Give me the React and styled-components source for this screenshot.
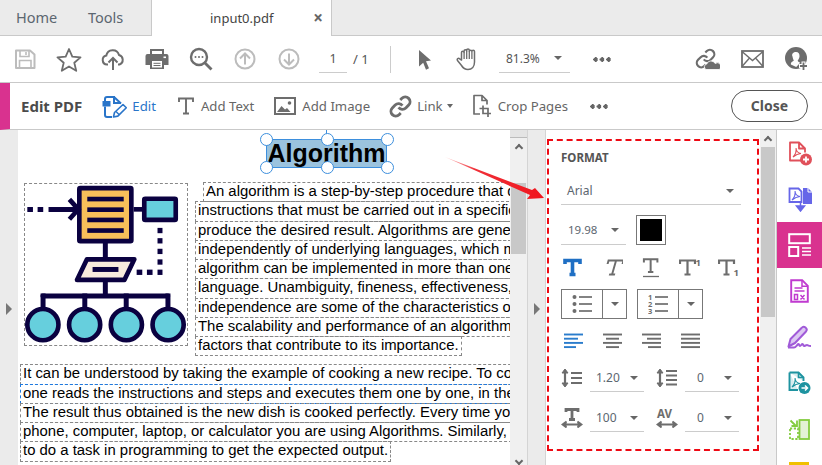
import styled, { createGlobalStyle } from "styled-components";

const Global = createGlobalStyle`
  html, body { margin: 0; padding: 0; background: #fff; }
  * { box-sizing: border-box; }
`;

const GREY = "#6d6d6d";
const UI = `"Noto Sans", "Open Sans", sans-serif`;

const Icon = ({ w = 24, h = 24, box, children, color = GREY }) => (
  <svg width={w} height={h} viewBox={box || `0 0 ${w} ${h}`} fill="none" stroke={color} style={{ display: "block", flex: "none" }}>
    {children}
  </svg>
);

/* top toolbar icons */
const SaveIcon = () => (
  <Icon w={22} h={22} color="#bcbcbc">
    <path d="M2 2.500h14l4.500 4v13.500h-18.500z" strokeWidth="2" strokeLinejoin="round" />
    <path d="M6 3v5.500h9v-5.500M12 4v3" strokeWidth="1.600" />
    <path d="M5.500 20v-7.500h11.500v7.500" strokeWidth="1.600" />
  </Icon>
);
const StarIcon = () => (
  <Icon w={26} h={25}>
    <path d="M13 2l3.300 7.700 8.200.7-6.200 5.400 1.900 8-7.200-4.300-7.200 4.300 1.900-8-6.200-5.400 8.200-.7z" strokeWidth="1.800" strokeLinejoin="round" />
  </Icon>
);
const CloudIcon = () => (
  <Icon w={24} h={24}>
    <path d="M7 17.500H6a4.500 4.500 0 0 1-.7-8.900 6.500 6.500 0 0 1 12.700-.6 5 5 0 0 1 .5 9.500H17" strokeWidth="2" />
    <path d="M12 23V11M7.500 15.500L12 11l4.500 4.500" strokeWidth="2" />
  </Icon>
);
const PrintIcon = () => (
  <Icon w={24} h={24}>
    <path d="M5 7V2h14v5h2.500A2 2 0 0 1 23.500 9v9h-4.500v4H5v-4H.5V9a2 2 0 0 1 2-2z" fill={GREY} stroke="none" />
    <path d="M7 4h10v3H7z" fill="#fff" stroke="none" />
    <path d="M7 14h10v6.500H7z" fill="#fff" stroke="none" />
    <path d="M8.500 16.300h7M8.500 18.500h7" strokeWidth="1" />
    <rect x="18.500" y="9.500" width="2.500" height="1.600" fill="#fff" stroke="none" />
  </Icon>
);
const SearchIcon = () => (
  <Icon w={24} h={24}>
    <circle cx="10" cy="10" r="8" strokeWidth="2.400" />
    <path d="M16 16l6.500 6.500" strokeWidth="2.800" />
    <circle cx="6.500" cy="10" r="1" fill={GREY} stroke="none" />
    <circle cx="10" cy="10" r="1" fill={GREY} stroke="none" />
    <circle cx="13.500" cy="10" r="1" fill={GREY} stroke="none" />
  </Icon>
);
const ArrowCircle = ({ down }) => (
  <Icon w={22} h={22} color="#bcbcbc">
    <circle cx="11" cy="11" r="9.500" strokeWidth="2" />
    <path d={down ? "M11 5.500v11M6 11.500l5 5 5-5" : "M11 16.500v-11M6 10.500l5-5 5 5"} strokeWidth="2" />
  </Icon>
);
const PointerIcon = () => (
  <Icon w={14} h={21}>
    <path d="M1 1l12 10.500-5 .8 3 7-3 1.400-2.800-7-4.200 3.800z" fill={GREY} stroke="none" />
  </Icon>
);
const HandIcon = () => (
  <Icon w={23} h={24}>
    <path d="M5.500 13V5.500a1.300 1.300 0 0 1 2.600 0V4a1.300 1.300 0 0 1 2.600 0v-.7a1.300 1.300 0 0 1 2.600 0V4.500a1.300 1.300 0 0 1 2.600 0 1.300 1.300 0 0 1 2.600 0V15c0 4.500-2.500 7.500-6.500 7.500-3.500 0-5-1.500-6.500-4L1.500 13.500c-.9-1.500.9-2.800 2.100-1.700z" strokeWidth="1.500" strokeLinejoin="round" />
    <path d="M8.100 5.500V12M10.700 4v8M13.300 4.500V12M15.900 5V12" strokeWidth="1.300" />
  </Icon>
);
const CHAIN_A = "M10 13a5 5 0 0 0 7.540.54l3-3a5 5 0 0 0-7.070-7.070l-1.720 1.710";
const CHAIN_B = "M14 11a5 5 0 0 0-7.540-.54l-3 3a5 5 0 0 0 7.070 7.070l1.710-1.710";
const LinkCloudIcon = () => (
  <Icon w={25} h={22}>
    <g transform="scale(.88)">
      <path d={CHAIN_A} strokeWidth="2.500" />
      <path d={CHAIN_B} strokeWidth="2.500" />
    </g>
    <path d="M11 21.500a3 3 0 0 1 .8-5.600 4.500 4.500 0 0 1 8.300-.4A3.200 3.200 0 0 1 24.500 21.500z" fill={GREY} stroke="#fff" strokeWidth=".8" />
  </Icon>
);
const MailIcon = () => (
  <Icon w={23} h={18}>
    <rect x="1" y="1" width="21" height="16" strokeWidth="1.800" />
    <path d="M1 1.500l10.500 9 10.500-9M1 16.500l7.500-8.500M22 16.500l-7.500-8.500" strokeWidth="1.400" />
  </Icon>
);
const UserIcon = () => (
  <Icon w={24} h={24}>
    <circle cx="11" cy="11" r="11" fill={GREY} stroke="none" />
    <path d="M11 5c2.500 0 3.800 2 3.500 4.500-.2 1.800-1 3.200-1.800 4 0 .8.500 1.200 1.500 1.700l1 .5-4 4.300-5.300-2.500c-.4-1.600 1-2.800 2.900-3.700 0-.6-1-2-1.300-4.300C6.200 7 8.500 5 11 5z" fill="#fff" stroke="none" />
    <path d="M18.500 14.500v9M14 19h9" stroke="#fff" strokeWidth="4" />
    <path d="M18.500 15.500v7.500M15 19h7" strokeWidth="1.800" />
  </Icon>
);

/* edit bar icons */
const EditIcon = () => (
  <Icon w={25} h={25} color="#2a75c9">
    <path d="M3 7V5a2 2 0 0 1 2-2H12v6h7" strokeWidth="2" />
    <path d="M0.500 7h8v5.500h-8z" fill="#2a75c9" stroke="none" />
    <path d="M12 3l7 6.500M3 12.500V21a2 2 0 0 0 2 2h5" strokeWidth="2" />
    <path d="M11.500 23l1-4.500 8.500-8 3.300 3.300-8.500 8.300z" strokeWidth="1.600" strokeLinejoin="round" />
    <path d="M14 17.500l3.500 3.500" strokeWidth="1.400" />
  </Icon>
);
const TextIcon = () => (
  <Icon w={16} h={18}>
    <path d="M1 5V1.500h14V5M8 1.500V16.500M5 16.500h6" strokeWidth="1.900" />
  </Icon>
);
const ImageIcon = () => (
  <Icon w={22} h={18}>
    <rect x="1" y="1" width="20" height="16" strokeWidth="2" />
    <path d="M3 15l4.500-6 3.500 3.500 2-1.500 3.500 4z" fill={GREY} stroke="none" />
    <circle cx="15.500" cy="6" r="1.800" fill={GREY} stroke="none" />
  </Icon>
);
const LinkIcon = () => (
  <Icon w={23} h={23} box="0 0 24 24">
    <path d={CHAIN_A} strokeWidth="3" />
    <path d={CHAIN_B} strokeWidth="3" />
  </Icon>
);
const CropIcon = () => (
  <Icon w={20} h={24}>
    <path d="M8 20H2V1.500h8l5 5v4M10 1.500v5h5" strokeWidth="1.700" strokeLinejoin="round" />
    <path d="M11 11.500v8h8M7.500 14.500h8.500v8.500" strokeWidth="1.700" />
  </Icon>
);

/* format panel icons */
const LetterT = ({ x = 0, y = 0, s = 1, w = 2, color = GREY, italic }) => (
  <path
    transform={`translate(${x} ${y}) scale(${s})${italic ? " skewX(-16) translate(5 0)" : ""}`}
    d="M1 5V1.500h15V5M8.500 1.500V15.500M5.500 15.500h6"
    stroke={color}
    strokeWidth={w}
    fill="none"
  />
);
const ListIcon = ({ numbered }) => (
  <Icon w={20} h={20}>
    {[3, 10, 17].map((y, i) => (
      <g key={y}>
        <path d={`M7 ${y}h13`} strokeWidth="1.700" />
        {numbered ? (
          <text x="0" y={y + 3} fontSize="7.500" fontFamily={UI} fontWeight="700" fill={GREY} stroke="none">{i + 1}</text>
        ) : (
          <circle cx="2.500" cy={y} r="2" fill={GREY} stroke="none" />
        )}
      </g>
    ))}
  </Icon>
);
const AlignIcon = ({ lines, color = GREY }) => (
  <Icon w={20} h={16} color={color}>
    {lines.map(([a, b], i) => (
      <path key={i} d={`M${a} ${1.500 + i * 4.200}H${b}`} strokeWidth="1.900" />
    ))}
  </Icon>
);
const SpacingArrows = () => (
  <>
    <path d="M4 2v16" strokeWidth="2.200" />
    <path d="M1 5l3-4 3 4zM1 15l3 4 3-4z" fill={GREY} stroke={GREY} strokeWidth="1" />
  </>
);
const LineSpaceIcon = () => (
  <Icon w={22} h={20}>
    <SpacingArrows />
    <path d="M10 5h11M10 10h11M10 15h11" strokeWidth="1.900" />
  </Icon>
);
const ParaSpaceIcon = () => (
  <Icon w={22} h={20}>
    <SpacingArrows />
    <path d="M10 3h11M10 7.500h11M10 12h11M10 16.500h11" strokeWidth="1.900" />
  </Icon>
);
const WidthArrow = () => (
  <path d="M2 16.500h18M5.500 13.500l-4 3 4 3M16.500 13.500l4 3-4 3" fill={GREY} stroke={GREY} strokeWidth="1.800" />
);
const ScaleIcon = () => (
  <Icon w={22} h={20}>
    <path d="M5 4V1.500h12V4M11 1.500v10M8 11.500h6" strokeWidth="2.800" />
    <WidthArrow />
  </Icon>
);
const KernIcon = () => (
  <Icon w={22} h={20}>
    <text x="1" y="10" fontSize="11.500" fontWeight="700" fontFamily={UI} fill={GREY} stroke="none">AV</text>
    <WidthArrow />
  </Icon>
);

/* right rail icons */
const RailDoc = ({ color, children }) => (
  <Icon w={24} h={25} color={color}>
    <path d="M14 19.500H2V1.500h9l6 6v4M11 1.500v6h6" strokeWidth="1.800" strokeLinejoin="round" />
    {children}
  </Icon>
);
const PdfGlyph = ({ color, x = 0, y = 0 }) => (
  <path transform={`translate(${x} ${y})`} d="M5 16c2-2 3.500-6 3-9 .2 3 2 5 5 5.500-2.500.2-5.500 1.500-8 3.500z" stroke={color} strokeWidth="1.100" />
);
const RailCreate = () => (
  <RailDoc color="#e0505a">
    <PdfGlyph color="#e0505a" />
    <circle cx="18" cy="18.500" r="6" fill="#e0505a" stroke="none" />
    <path d="M18 15.500v6M15 18.500h6" stroke="#fff" strokeWidth="1.800" />
  </RailDoc>
);
const RailCombine = () => (
  <Icon w={24} h={25} color="#6666e8">
    <path d="M1.500 1.500h9l3 3V15H1.500z" strokeWidth="1.800" />
    <PdfGlyph color="#6666e8" x="-1" y="-3" />
    <path d="M15 1h5l4 4v12H15z" fill="#6666e8" stroke="none" />
    <path d="M20 1v4h4" stroke="#fff" strokeWidth="1" />
    <path d="M12.500 15v5M8.500 19h8l-4 5z" fill="#6666e8" strokeWidth="1.500" />
  </Icon>
);
const RailLayout = () => (
  <Icon w={23} h={24} color="#fff">
    <rect x="1.200" y="1.200" width="20.600" height="9" strokeWidth="2" />
    <rect x="1.200" y="14" width="9" height="9" strokeWidth="2" />
    <path d="M14 15h9M14 18.500h9M14 22h9" strokeWidth="1.300" />
  </Icon>
);
const RailExport = () => (
  <Icon w={19} h={24} color="#c03ad0">
    <path d="M1.200 1.200h11l5.600 5.600v16H1.200z" strokeWidth="1.900" />
    <path d="M12 1.200v6h6" strokeWidth="1.500" />
    <path d="M4.500 9h8M4.500 12h10" strokeWidth="1.300" />
    <path d="M4.500 15.500h3v5h-3zM10.500 16l4 4.500M14.500 16l-4 4.500" strokeWidth="1.500" />
  </Icon>
);
const RailSign = () => (
  <Icon w={25} h={24} color="#a05ad8">
    <path d="M1.500 21.500l2-7.500L14.500 3a2.800 2.800 0 0 1 4.500 3.500L8 18z" fill="#dcc8f2" strokeWidth="2" strokeLinejoin="round" />
    <path d="M1 22.500h6c2 0 3-3 4.500-3.500 1 0 .5 2 1.500 2s1.500-2 2.500-2 .5 2 1.500 2 2-1 3-1 1 1 4 1" strokeWidth="2" />
  </Icon>
);
const RailSend = () => (
  <Icon w={23} h={24} color="#1e93a0">
    <path d="M1.500 1.500h9l5 5V10M1.500 1.500V19H10" strokeWidth="1.900" fill="#d8ecef" />
    <path d="M10.500 1.500v5h5" strokeWidth="1.600" />
    <PdfGlyph color="#1e93a0" x="-1" />
    <circle cx="16.500" cy="17" r="6" fill="#1e93a0" stroke="none" />
    <path d="M13.500 17h5.500M17 14.500l2.500 2.500-2.500 2.500" stroke="#fff" strokeWidth="1.500" />
  </Icon>
);
const RailOrganize = () => (
  <Icon w={21} h={21} color="#84cc40">
    <rect x="10.500" y="1" width="9.500" height="19" fill="#e4f2d6" strokeWidth="1.800" />
    <rect x="1" y="9.500" width="8" height="10.500" strokeWidth="1.800" strokeDasharray="2.200 1.600" />
    <path d="M8 1.500v5.500H2.500M6.500 6.500l-5-5" strokeWidth="1.800" />
  </Icon>
);

const Illustration = () => {
  const navy = "#0a0140";
  const cyan = "#66cfdd";
  return (
    <svg width="162" height="160" viewBox="75 163 489 482" fill={navy} stroke="none" style={{ display: "block" }}>
      <rect x="239" y="175" width="157" height="160" rx="3" fill="#f8bf5a" stroke={navy} strokeWidth="14" />
      {[201, 233, 264, 296].map((y) => <rect key={y} x="263" y={y} width="110" height="14" />)}
      <rect x="82" y="232" width="17" height="15" />
      <rect x="113" y="232" width="17" height="15" />
      <rect x="146" y="232" width="90" height="15" />
      <path d="M209 209l27 30-27 30" fill="none" stroke={navy} strokeWidth="14" />
      <rect x="403" y="232" width="28" height="14" />
      <rect x="435" y="207" width="95" height="64" rx="3" fill={cyan} stroke={navy} strokeWidth="14" />
      {[295, 326, 358, 390, 421].map((y) => <rect key={y} x="475" y={y} width="15" height="16" />)}
      <rect x="412" y="421" width="17" height="16" />
      <rect x="443" y="421" width="17" height="16" />
      <rect x="310" y="340" width="15" height="46" />
      <path d="M262 390h143l-30 62H232z" fill="#f8ebdd" stroke={navy} strokeWidth="14" strokeLinejoin="round" />
      <rect x="279" y="413" width="78" height="15" />
      <rect x="310" y="458" width="15" height="38" />
      <rect x="122" y="493" width="391" height="15" rx="6" />
      {[122, 248, 373, 499].map((x) => <rect key={x} x={x} y="493" width="15" height="44" />)}
      {[129, 255, 381, 507].map((x) => <circle key={x} cx={x} cy="587" r="47" fill={cyan} stroke={navy} strokeWidth="14" />)}
    </svg>
  );
};

const upper = [
  "An algorithm is a step-by-step procedure that d",
  "instructions that must be carried out in a specific",
  "produce the desired result. Algorithms are generally",
  "independently of underlying languages, which means",
  "algorithm can be implemented in more than one pro",
  "language. Unambiguity, fineness, effectiveness, and",
  "independence are some of the characteristics of an",
  "The scalability and performance of an algorithm are",
  "factors that contribute to its importance.",
];
const lower = [
  "It can be understood by taking the example of cooking a new recipe. To cook",
  "one reads the instructions and steps and executes them one by one, in the given",
  "The result thus obtained is the new dish is cooked perfectly. Every time you use",
  "phone, computer, laptop, or calculator you are using Algorithms. Similarly, algo",
  "to do a task in programming to get the expected output.",
];

const App = () => (
  <Shell>
    <Global />
    <TabBar>
      <Tab>Home</Tab>
      <Tab>Tools</Tab>
      <ActiveTab>
        input0.pdf
        <CloseX>×</CloseX>
      </ActiveTab>
    </TabBar>

    <Toolbar>
      <ToolSlot><SaveIcon /></ToolSlot>
      <ToolSlot><StarIcon /></ToolSlot>
      <ToolSlot><CloudIcon /></ToolSlot>
      <ToolSlot><PrintIcon /></ToolSlot>
      <ToolSlot><SearchIcon /></ToolSlot>
      <ToolSlot><ArrowCircle /></ToolSlot>
      <ToolSlot><ArrowCircle down /></ToolSlot>
      <PageField>1</PageField>
      <PageTotal>/ 1</PageTotal>
      <ToolDivider />
      <ToolSlot $w={14} $ml={27}><PointerIcon /></ToolSlot>
      <ToolSlot $w={23} $ml={24}><HandIcon /></ToolSlot>
      <ZoomField>81.3%<Caret /></ZoomField>
      <Dots $ml={23} />
      <RightTools>
        <LinkCloudIcon />
        <MailIcon />
        <UserIcon />
      </RightTools>
    </Toolbar>

    <EditBar>
      <EditTitle>Edit PDF</EditTitle>
      <EditAction $active $ml={20} $gap={5}><EditIcon />Edit</EditAction>
      <EditAction $ml={22} $gap={7}><TextIcon />Add Text</EditAction>
      <EditAction $ml={20} $gap={6}><ImageIcon />Add Image</EditAction>
      <EditAction $ml={19} $gap={5}><LinkIcon />Link<Caret $small /></EditAction>
      <EditAction $ml={19} $gap={6}><CropIcon />Crop Pages</EditAction>
      <Dots $ml={22} />
      <CloseButton>Close</CloseButton>
    </EditBar>

    <Body>
      <Gutter><SideArrow /></Gutter>
      <Page>
        <TitleRow>
          <Selection>
            Algorithm
            <HandleStem />
            <Handle $x="left" $y="top" />
            <Handle $x="mid" $y="top" />
            <Handle $x="right" $y="top" />
            <Handle $x="left" $y="bottom" />
            <Handle $x="mid" $y="bottom" />
            <Handle $x="right" $y="bottom" />
          </Selection>
        </TitleRow>
        <Columns>
          <Figure><Illustration /></Figure>
          <Lines>
            {upper.map((t, i) => (
              <TextLine key={t} $ml={i === 0 ? 8 : 0}>{t}</TextLine>
            ))}
          </Lines>
        </Columns>
        <LowerLines>
          {lower.map((t, i) => (
            <TextLine key={t} $focus={i === 1}>{t}</TextLine>
          ))}
        </LowerLines>
      </Page>
      <Scrollbar $w={17} $thumbTop={53} $thumbH={71}>
        <ScrollCap />
        <Chevron $top={15} />
        <Chevron $bottom />
      </Scrollbar>
      <Gutter $w={19} $edge><SideArrow /></Gutter>

      <Panel>
        <FormatBox>
          <Heading>FORMAT</Heading>
          <Select $w={180} $h={28} $size={12} $pl={6} $pr={7} $mt={12}>Arial<Caret /></Select>
          <SizeRow>
            <Select $w={65} $h={30} $size={11.500} $pl={7} $pr={7}>19.98<Caret /></Select>
            <Swatch />
          </SizeRow>
          <StyleRow>
            <Icon w={22} h={20}><LetterT x={2} y={1} color="#1f6fc4" w={3.600} /></Icon>
            <Icon w={22} h={20}><LetterT x={2} y={1} italic w={2} /></Icon>
            <Icon w={22} h={20}><LetterT x={3} y={0} s={0.9} w={2.200} /><path d="M3 18.500h16" strokeWidth="1.300" /></Icon>
            <Icon w={22} h={20}><LetterT x={0} y={1} w={2.200} /><text x="16.500" y="8" fontSize="9.500" fontFamily={UI} fontWeight="700" fill={GREY} stroke="none">1</text></Icon>
            <Icon w={22} h={20}><LetterT x={0} y={1} w={2.200} /><text x="15.500" y="18" fontSize="9.500" fontFamily={UI} fontWeight="700" fill={GREY} stroke="none">1</text></Icon>
          </StyleRow>
          <ListRow>
            <SplitButton><SplitMain><ListIcon /></SplitMain><SplitDrop><Caret /></SplitDrop></SplitButton>
            <SplitButton><SplitMain><ListIcon numbered /></SplitMain><SplitDrop><Caret /></SplitDrop></SplitButton>
          </ListRow>
          <AlignRow>
            <AlignIcon color="#2a7ccc" lines={[[0, 19], [0, 14], [0, 19], [0, 12]]} />
            <AlignIcon lines={[[0, 19], [3, 16], [0, 19], [3, 16]]} />
            <AlignIcon lines={[[0, 19], [5, 19], [0, 19], [6, 19]]} />
            <AlignIcon lines={[[0, 19], [0, 19], [0, 19], [0, 19]]} />
          </AlignRow>
          <SpacingRow $mt={15}>
            <LineSpaceIcon />
            <Select $w={54} $h={28} $size={12} $pl={6} $pr={6} $ml={7}>1.20<Caret /></Select>
            <ParaSpaceIcon />
            <Select $w={54} $h={28} $size={12} $pl={12} $pr={7} $ml={7}>0<Caret /></Select>
          </SpacingRow>
          <SpacingRow $mt={12}>
            <ScaleIcon />
            <Select $w={54} $h={28} $size={12} $pl={6} $pr={6} $ml={7}>100<Caret /></Select>
            <KernIcon />
            <Select $w={54} $h={28} $size={12} $pl={12} $pr={7} $ml={7}>0<Caret /></Select>
          </SpacingRow>
        </FormatBox>
      </Panel>
      <Scrollbar $w={16} $thumbTop={17} $thumbH={170}>
        <Chevron $top={7} />
      </Scrollbar>

      <Rail>
        <RailItem><RailCreate /></RailItem>
        <RailItem><RailCombine /></RailItem>
        <RailItem $active><RailLayout /></RailItem>
        <RailItem><RailExport /></RailItem>
        <RailItem><RailSign /></RailItem>
        <RailItem><RailSend /></RailItem>
        <RailItem><RailOrganize /></RailItem>
        <RailStub />
      </Rail>

      <RedArrow width="104" height="46" viewBox="0 0 104 46">
        <defs>
          <linearGradient id="arrowFade" x1="0" y1="0" x2="1" y2="0">
            <stop offset="0" stopColor="#ffd0d0" />
            <stop offset="0.3" stopColor="#f03038" />
            <stop offset="1" stopColor="#f0141c" />
          </linearGradient>
        </defs>
        <path d="M0 0L87 33 90 31 99 41 82 42 85 38z" fill="url(#arrowFade)" />
      </RedArrow>
    </Body>
  </Shell>
);

const Shell = styled.div`
  width: 822px;
  height: 465px;
  overflow: hidden;
  font-family: ${UI};
  color: #555;
  background: #fff;
`;
const TabBar = styled.div`
  display: flex;
  height: 36px;
  padding-left: 16px;
  background: #ebebeb;
  border-bottom: 1px solid #c9c9c9;
`;
const Tab = styled.div`
  width: 72px;
  font-size: 14.500px;
  line-height: 35px;
  color: #5c6670;
`;
const ActiveTab = styled.div`
  position: relative;
  width: 181px;
  height: 36px;
  margin-left: -9px;
  padding-left: 58px;
  font-size: 13px;
  line-height: 36px;
  color: #444;
  background: #fff;
  border-left: 1px solid #c9c9c9;
  border-right: 1px solid #c9c9c9;
`;
const CloseX = styled.span`
  position: absolute;
  right: 5px;
  top: 0;
  width: 16px;
  text-align: center;
  font-size: 17px;
  font-weight: 700;
  color: #666;
`;
const Toolbar = styled.div`
  display: flex;
  align-items: center;
  height: 47px;
  padding-left: 3px;
  border-bottom: 1px solid #c9c9c9;
`;
const ToolSlot = styled.div`
  display: flex;
  justify-content: center;
  flex: none;
  width: ${(p) => p.$w || 44}px;
  margin-left: ${(p) => p.$ml || 0}px;
`;
const PageField = styled.div`
  width: 28px;
  height: 27px;
  margin-left: 8px;
  margin-top: 1px;
  font-size: 12.500px;
  line-height: 25px;
  text-align: center;
  border-bottom: 1px solid #ccc;
`;
const PageTotal = styled.div`
  width: 43px;
  padding-left: 6px;
  font-size: 13px;
`;
const ToolDivider = styled.div`
  width: 1px;
  height: 27px;
  background: #ccc;
`;
const ZoomField = styled.div`
  display: flex;
  align-items: center;
  justify-content: space-between;
  width: 71px;
  height: 27px;
  margin-left: 20px;
  margin-top: 1px;
  padding: 0 8px 2px 7px;
  font-size: 12px;
  border-bottom: 1px solid #ccc;
`;
const Caret = styled.span`
  display: inline-block;
  flex: none;
  width: 0;
  height: 0;
  margin-left: ${(p) => (p.$small ? -1 : 0)}px;
  border-left: ${(p) => (p.$small ? 3.500 : 4)}px solid transparent;
  border-right: ${(p) => (p.$small ? 3.500 : 4)}px solid transparent;
  border-top: ${(p) => (p.$small ? 4 : 4.500)}px solid #666;
`;
const Dots = styled.div`
  flex: none;
  width: 18px;
  height: 5px;
  margin-left: ${(p) => p.$ml || 0}px;
  background: radial-gradient(circle 2.300px at 2.500px 2.500px, #666 95%, transparent 100%) 0 0 / 6.500px 5px repeat-x;
`;
const RightTools = styled.div`
  display: flex;
  align-items: center;
  gap: 21px;
  margin-left: auto;
  margin-right: 13px;
`;
const EditBar = styled.div`
  display: flex;
  align-items: center;
  height: 47px;
  border-left: 10px solid #d9328f;
  border-bottom: 1px solid #c9c9c9;
`;
const EditTitle = styled.div`
  margin-left: 11px;
  font-size: 15px;
  font-weight: 700;
  color: #4b4b4b;
`;
const EditAction = styled.div`
  display: flex;
  align-items: center;
  gap: ${(p) => p.$gap}px;
  margin-left: ${(p) => p.$ml}px;
  font-size: 13.200px;
  color: ${(p) => (p.$active ? "#2a75c9" : "#666")};
`;
const CloseButton = styled.div`
  width: 77px;
  height: 32px;
  margin-left: auto;
  margin-right: 14px;
  font-size: 14px;
  font-weight: 700;
  line-height: 29px;
  text-align: center;
  color: #555;
  border: 1.500px solid #555;
  border-radius: 16px;
`;
const Body = styled.div`
  position: relative;
  display: flex;
  height: 335px;
`;
const Gutter = styled.div`
  display: flex;
  align-items: center;
  justify-content: center;
  flex: none;
  width: ${(p) => p.$w || 18}px;
  background: #ebebeb;
  border-left: ${(p) => (p.$edge ? "1px solid #d4d4d4" : "none")};
  border-right: ${(p) => (p.$edge ? "1px solid #d4d4d4" : "none")};
`;
const SideArrow = styled.span`
  width: 0;
  height: 0;
  margin-top: 22px;
  border-top: 6px solid transparent;
  border-bottom: 6px solid transparent;
  border-left: 6px solid #777;
`;
const Page = styled.div`
  flex: none;
  width: 492px;
  overflow: hidden;
  padding-top: 10px;
  background: #fff;
`;
const TitleRow = styled.div`
  display: flex;
  height: 27px;
  padding-left: 248px;
`;
const Selection = styled.div`
  position: relative;
  width: 121px;
  height: 29px;
  margin-top: -1px;
  font-family: "Liberation Sans", Arial, sans-serif;
  font-size: 25px;
  font-weight: 700;
  line-height: 27px;
  text-align: center;
  color: #000;
  background: #9bc3de;
  border: 1px solid #3d8fdd;
`;
const handleX = { left: "-7px", mid: "calc(50% - 6px)", right: "calc(100% - 5px)" };
const Handle = styled.span`
  position: absolute;
  left: ${(p) => handleX[p.$x]};
  top: ${(p) => (p.$y === "top" ? "-7px" : "calc(100% - 6px)")};
  width: 13px;
  height: 13px;
  background: #fff;
  border: 1.500px solid #3d8fdd;
  border-radius: 50%;
`;
const HandleStem = styled.span`
  position: absolute;
  left: calc(50% - 1px);
  top: -10px;
  width: 1.500px;
  height: 4px;
  background: #3d8fdd;
`;
const Columns = styled.div`
  display: flex;
  margin-top: 15px;
  padding-left: 6px;
`;
const Figure = styled.div`
  flex: none;
  width: 164px;
  height: 163px;
  margin-top: 1px;
  border: 1px dashed #888;
`;
const Lines = styled.div`
  flex: 1;
  min-width: 0;
  margin-left: 7px;
`;
const LowerLines = styled.div`
  margin-top: 9px;
  padding-left: 2px;
`;
const TextLine = styled.div`
  width: fit-content;
  height: 20.250px;
  margin-left: ${(p) => p.$ml || 0}px;
  margin-bottom: -1px;
  padding: 0 2px;
  font-family: "Liberation Sans", Arial, sans-serif;
  font-size: 14.900px;
  line-height: 16px;
  white-space: pre;
  color: #000;
  border: 1px dashed ${(p) => (p.$focus ? "#1f7ae0" : "#888")};
`;
const Scrollbar = styled.div`
  position: relative;
  flex: none;
  width: ${(p) => p.$w}px;
  background: #f0f0f0;
  &::after {
    content: "";
    position: absolute;
    left: 1px;
    right: 1px;
    top: ${(p) => p.$thumbTop}px;
    height: ${(p) => p.$thumbH}px;
    background: #c8c8c8;
  }
`;
const ScrollCap = styled.span`
  position: absolute;
  left: 0;
  right: 0;
  top: 0;
  height: 8px;
  background: #e4e4e4;
  border-bottom: 1px solid #bbb;
`;
const Chevron = styled.span`
  position: absolute;
  left: calc(50% - 3px);
  ${(p) => (p.$bottom ? "bottom: 1px" : `top: ${p.$top}px`)};
  width: 6px;
  height: 6px;
  border-left: 2px solid #666;
  border-top: 2px solid #666;
  transform: rotate(${(p) => (p.$bottom ? 225 : 45)}deg);
`;
const Panel = styled.div`
  flex: none;
  width: 214px;
  padding: 9px 0 0 1px;
  background: #fff;
`;
const FormatBox = styled.div`
  display: flex;
  flex-direction: column;
  width: 212px;
  height: 312px;
  padding: 10px 0 0 12px;
  border: 2px dashed #ee0a14;
`;
const Heading = styled.div`
  font-size: 11.500px;
  font-weight: 700;
  line-height: 14px;
  color: #555;
`;
const Select = styled.div`
  display: flex;
  align-items: center;
  justify-content: space-between;
  flex: none;
  width: ${(p) => p.$w}px;
  height: ${(p) => p.$h}px;
  margin-left: ${(p) => p.$ml || 0}px;
  margin-top: ${(p) => p.$mt || 0}px;
  padding: 0 ${(p) => p.$pr}px 0 ${(p) => p.$pl}px;
  font-size: ${(p) => p.$size}px;
  color: #5c6670;
  border-bottom: 1px solid #ccc;
`;
const SizeRow = styled.div`
  display: flex;
  align-items: center;
  gap: 10px;
  margin-top: 10px;
`;
const Swatch = styled.div`
  width: 30px;
  height: 30px;
  background: #000;
  border: 1px solid #777;
  box-shadow: inset 0 0 0 3px #fff;
`;
const StyleRow = styled.div`
  display: flex;
  gap: 17px;
  margin-top: 13px;
  margin-left: 1px;
`;
const ListRow = styled.div`
  display: flex;
  gap: 10px;
  margin-top: 11px;
`;
const SplitButton = styled.div`
  display: flex;
  width: 66px;
  height: 30px;
  border: 1px solid #777;
`;
const SplitMain = styled.div`
  display: flex;
  align-items: center;
  justify-content: center;
  width: 41px;
  border-right: 1px solid #777;
`;
const SplitDrop = styled.div`
  display: flex;
  flex: 1;
  align-items: center;
  justify-content: center;
`;
const AlignRow = styled.div`
  display: flex;
  gap: 19px;
  margin-top: 14px;
  margin-left: 3px;
`;
const SpacingRow = styled.div`
  display: flex;
  align-items: center;
  margin-top: ${(p) => p.$mt}px;
  & > svg:nth-of-type(2) { margin-left: 12px; }
`;
const Rail = styled.div`
  display: flex;
  flex-direction: column;
  flex: none;
  width: 46px;
  background: #fff;
  border-left: 1px solid #c9c9c9;
`;
const RailItem = styled.div`
  display: flex;
  align-items: center;
  justify-content: center;
  height: 46px;
  background: ${(p) => (p.$active ? "#d9328f" : "transparent")};
`;
const RailStub = styled.div`
  width: 20px;
  height: 3px;
  margin: 10px 0 0 12px;
  background: #f0c000;
`;
const RedArrow = styled.svg`
  position: absolute;
  left: 445px;
  top: 27px;
`;

export default App;
